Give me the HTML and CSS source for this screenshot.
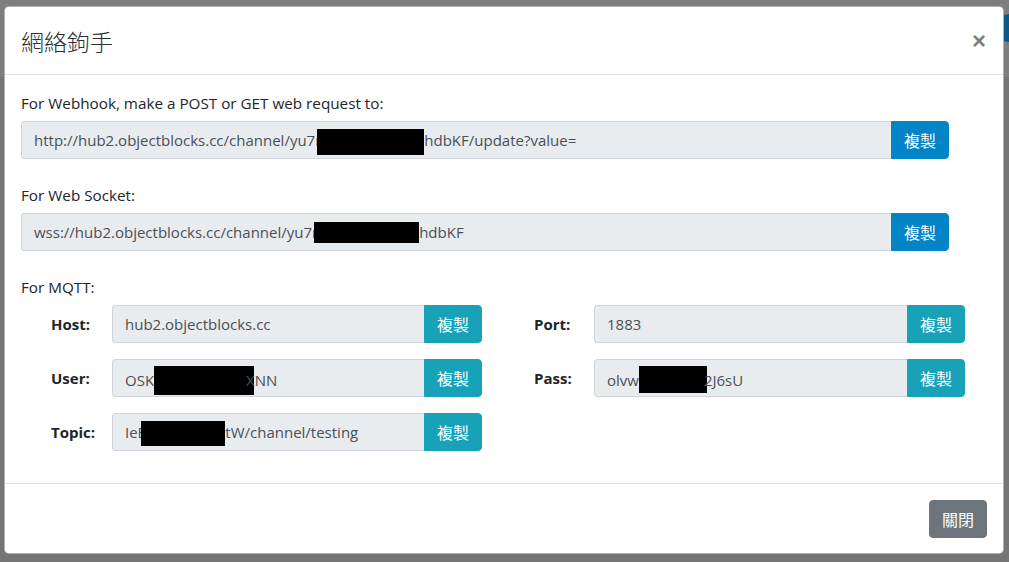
FILE: index.html
```html
<!DOCTYPE html>
<html lang="zh-Hant">
<head>
<meta charset="utf-8">
<title>網絡鉤手</title>
<link rel="stylesheet" href="styles.css">
</head>
<body>
<div class="page">
  <div class="page-top"><span class="avatar"></span></div>
  <div class="page-rest"></div>
</div>

<div class="modal">
  <div class="modal-header">
    <h4 class="modal-title">網絡鉤手</h4>
    <button class="close" type="button">×</button>
  </div>
  <div class="modal-body">
    <p class="section-label">For Webhook, make a POST or GET web request to:</p>
    <div class="input-group wide">
      <div class="field">http://hub2.objectblocks.cc/channel/yu7r<span class="redact r1"></span>hdbKF/update?value=</div>
      <button class="btn btn-primary">複製</button>
    </div>

    <p class="section-label">For Web Socket:</p>
    <div class="input-group wide">
      <div class="field">wss://hub2.objectblocks.cc/channel/yu7r<span class="redact r2"></span>hdbKF</div>
      <button class="btn btn-primary">複製</button>
    </div>

    <p class="section-label">For MQTT:</p>
    <div class="mqtt-grid">
      <div class="mqtt-row">
        <span class="row-label">Host:</span>
        <div class="input-group">
          <div class="field">hub2.objectblocks.cc</div>
          <button class="btn btn-info">複製</button>
        </div>
      </div>
      <div class="mqtt-row">
        <span class="row-label">Port:</span>
        <div class="input-group">
          <div class="field">1883</div>
          <button class="btn btn-info">複製</button>
        </div>
      </div>
      <div class="mqtt-row">
        <span class="row-label">User:</span>
        <div class="input-group">
          <div class="field">OSK<span class="redact r3"></span>XNN</div>
          <button class="btn btn-info">複製</button>
        </div>
      </div>
      <div class="mqtt-row">
        <span class="row-label">Pass:</span>
        <div class="input-group">
          <div class="field">olvw<span class="redact r4"></span>2J6sU</div>
          <button class="btn btn-info">複製</button>
        </div>
      </div>
      <div class="mqtt-row">
        <span class="row-label">Topic:</span>
        <div class="input-group">
          <div class="field">IeB<span class="redact r5"></span>tW/channel/testing</div>
          <button class="btn btn-info">複製</button>
        </div>
      </div>
    </div>
  </div>
  <div class="modal-footer">
    <button class="btn btn-secondary">關閉</button>
  </div>
</div>
</body>
</html>
```

FILE: styles.css
```css
* { box-sizing: border-box; }

html, body {
  margin: 0;
  height: 100%;
}

body {
  font-family: "Open Sans", "Noto Sans CJK TC", sans-serif;
  font-size: 16px;
  line-height: 24px;
  color: #212529;
  background: #737373;
  overflow: hidden;
}

.page {
  height: 100%;
  display: flex;
  flex-direction: column;
}

.page-top {
  height: 77px;
  background: #7e7e7e;
  position: relative;
}

.avatar {
  position: absolute;
  left: 996px;
  top: 14px;
  width: 28px;
  height: 28px;
  border-radius: 50%;
  background: #0b5a86;
}

.page-rest {
  flex: 1;
  background: #757575;
}

.modal {
  position: absolute;
  top: 6px;
  left: 4px;
  width: 1000px;
  background: #fff;
  border: 1px solid rgba(0, 0, 0, 0.3);
  border-radius: 5px;
}

.modal-header {
  display: flex;
  align-items: flex-start;
  padding: 16px 16px 15px;
  border-bottom: 1px solid #dee2e6;
}

.modal-title {
  margin: 0;
  font-size: 23px;
  line-height: 36px;
  font-weight: 300;
  font-family: "Noto Sans CJK TC", sans-serif;
  color: #2b2f33;
}

.close {
  margin: -16px -16px -16px auto;
  padding: 16px 17px 16px 16px;
  background: transparent;
  border: 0;
  font-family: "Liberation Sans", sans-serif;
  font-size: 24px;
  font-weight: 700;
  line-height: 36px;
  color: #000;
  opacity: 0.5;
}

.modal-body {
  padding: 16px;
}

.section-label {
  margin: 0 0 6px;
  font-size: 15.25px;
  line-height: 24px;
}

.input-group {
  display: flex;
  height: 38px;
  flex: 1;
}

.input-group.wide {
  width: 928px;
  margin-bottom: 24px;
}

.field {
  flex: 1;
  min-width: 0;
  padding: 6px 12px;
  font-size: 15px;
  line-height: 24px;
  color: #495057;
  background: #e9ecef;
  border: 1px solid #ced4da;
  border-right: 0;
  border-radius: 4px 0 0 4px;
  white-space: nowrap;
  overflow: hidden;
}

.btn {
  width: 58px;
  padding: 6px 0;
  font-family: "Noto Sans CJK TC", sans-serif;
  font-size: 16px;
  line-height: 24px;
  color: #fff;
  border: 1px solid transparent;
  border-radius: 0 4px 4px 0;
  text-align: center;
}

.btn-primary { background: #0284c6; border-color: #0284c6; }
.btn-info { background: #17a2b8; border-color: #17a2b8; }
.btn-secondary {
  background: #6c757d;
  border-color: #6c757d;
  border-radius: 4px;
}

.mqtt-grid {
  display: grid;
  grid-template-columns: 431px 431px;
  column-gap: 52px;
  row-gap: 16px;
  padding-left: 30px;
  margin-bottom: 16px;
}

.mqtt-row {
  display: flex;
  align-items: center;
}

.row-label {
  width: 61px;
  flex: none;
  font-size: 15px;
  font-weight: 700;
}

.mqtt-row:nth-child(even) .row-label { width: 60px; }

.redact {
  display: inline-block;
  background: #000;
}

.r1 { width: 107px; height: 26px; margin-left: -4px; vertical-align: -9px; }
.r2 { width: 105px; height: 21px; margin-left: -4px; vertical-align: -5px; }
.r3 { width: 100px; height: 29px; margin-right: -8px; vertical-align: -9px; }
.r4 { width: 68px; height: 27px; margin-right: -3px; vertical-align: -7px; }
.r5 { width: 84px; height: 25px; margin-left: -6px; vertical-align: -8px; }

.modal-footer {
  display: flex;
  justify-content: flex-end;
  padding: 16px 16px 15px;
  border-top: 1px solid #dee2e6;
}
```
